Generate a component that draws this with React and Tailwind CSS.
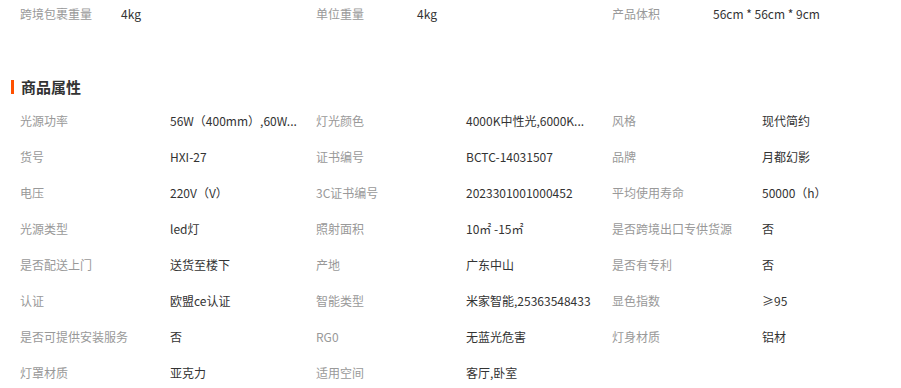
const topRow = [
  ["跨境包裹重量", "4kg"],
  ["单位重量", "4kg"],
  ["产品体积", "56cm * 56cm * 9cm"],
];

// long values are cut short like the page does it, with "..."
const attrs = [
  ["光源功率", "56W（400mm）,60W..."],
  ["灯光颜色", "4000K中性光,6000K..."],
  ["风格", "现代简约"],
  ["货号", "HXI-27"],
  ["证书编号", "BCTC-14031507"],
  ["品牌", "月都幻影"],
  ["电压", "220V（V）"],
  ["3C证书编号", "2023301001000452"],
  ["平均使用寿命", "50000（h）"],
  ["光源类型", "led灯"],
  ["照射面积", "10㎡ -15㎡"],
  ["是否跨境出口专供货源", "否"],
  ["是否配送上门", "送货至楼下"],
  ["产地", "广东中山"],
  ["是否有专利", "否"],
  ["认证", "欧盟ce认证"],
  ["智能类型", "米家智能,25363548433"],
  ["显色指数", "≥95"],
  ["是否可提供安装服务", "否"],
  ["RG0", "无蓝光危害"],
  ["灯身材质", "铝材"],
  ["灯罩材质", "亚克力"],
  ["适用空间", "客厅,卧室"],
];

export default function App() {
  return (
    <div
      className="w-[901px] h-[388px] bg-white overflow-hidden text-[12px]"
      style={{ fontFamily: '"Noto Sans CJK SC", "Noto Sans", sans-serif' }}
    >
      {/* package info */}
      <div className="grid grid-cols-[296px_296px_296px] pl-5 h-7 items-center">
        {topRow.map(([k, v]) => (
          <div key={k} className="flex items-center">
            <span className="w-[101px] shrink-0 text-[#999]">{k}</span>
            <span className="text-[#333]">{v}</span>
          </div>
        ))}
      </div>

      {/* title */}
      <div className="mt-[48px] h-[22px] flex items-center pl-[11px] gap-[7px]">
        <span className="w-[3px] h-[14px] bg-[#ff5000]" />
        <span className="text-[15px] font-bold text-[#333]">商品属性</span>
      </div>

      <div className="mt-[5px] grid grid-cols-[296px_296px_296px] pl-5">
        {attrs.map(([k, v]) => (
          <div key={k} className="flex items-center h-9">
            <span className="w-[150px] shrink-0 text-[#999] whitespace-nowrap">{k}</span>
            <span className="text-[#333] whitespace-nowrap">{v}</span>
          </div>
        ))}
      </div>
    </div>
  );
}
